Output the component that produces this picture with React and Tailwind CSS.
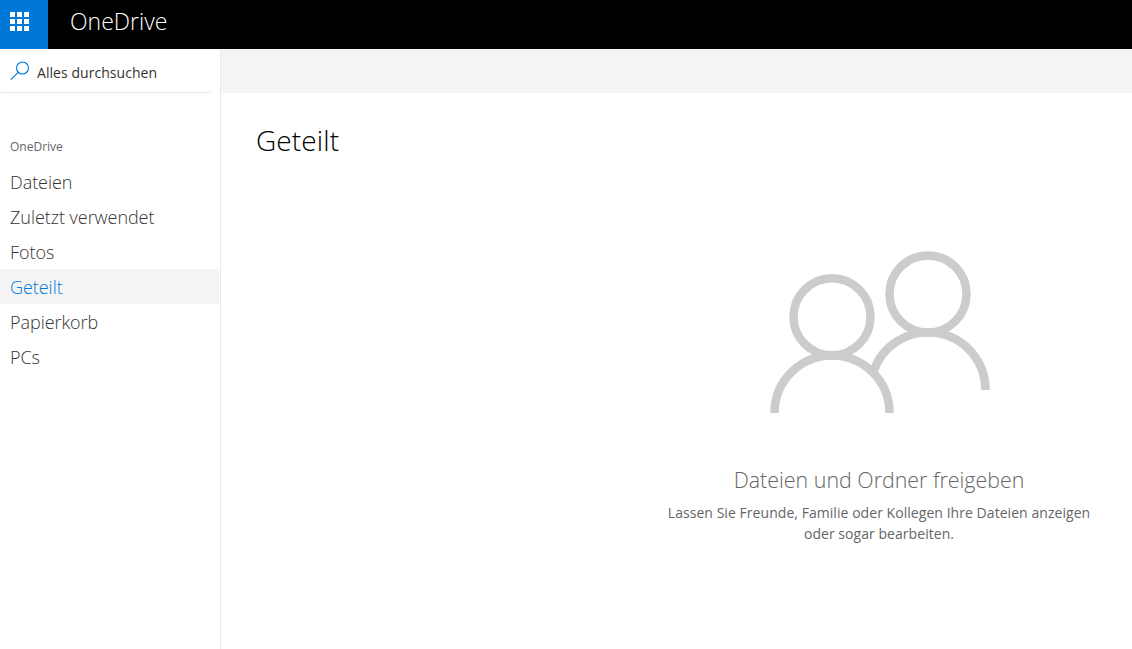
const navItems = ['Dateien', 'Zuletzt verwendet', 'Fotos', 'Geteilt', 'Papierkorb', 'PCs'];

function WaffleIcon() {
  return (
    <div className="grid grid-cols-3 gap-[2px]">
      {Array.from({ length: 9 }).map((_, index) => (
        <span key={index} className="block h-[5px] w-[5px] bg-white" />
      ))}
    </div>
  );
}

function SearchIcon() {
  return (
    <svg width="20" height="20" viewBox="0 0 20 20" fill="none" stroke="#0078d7" strokeWidth="1.1">
      <circle cx="12.5" cy="7" r="6" />
      <path d="M8.2 11.3 L0.8 18.7" />
    </svg>
  );
}

function PeopleIcon() {
  return (
    <svg width="222" height="164" viewBox="769 250 222 164" fill="none" stroke="#cccccc" strokeWidth="8.5">
      <circle cx="832" cy="316.7" r="38.5" />
      <circle cx="928" cy="294" r="38.5" />
      <path d="M774.5 413 A57.5 57.5 0 0 1 889.5 413" />
      <path d="M873 373 A57.5 57.5 0 0 1 985.5 390" />
    </svg>
  );
}

function App() {
  return (
    <div className="flex h-[649px] w-[1132px] flex-col overflow-hidden bg-white font-['Open_Sans',sans-serif]">
      <header className="flex h-[49px] shrink-0 items-center bg-black">
        <div className="flex h-full w-12 items-center justify-center bg-[#0078d7] pb-[6px] pr-[9px]">
          <WaffleIcon />
        </div>
        <span className="ml-[22px] pb-[6px] text-[23px] font-light text-white">OneDrive</span>
      </header>

      <div className="flex min-h-0 flex-1">
        <aside className="w-[221px] shrink-0 border-r border-[#eaeaea]">
          <div className="mx-[1px] flex h-[44px] w-[210px] items-center gap-[7px] border-b border-[#e6e6e6] pl-[9px]">
            <SearchIcon />
            <span className="pt-[4px] text-sm tracking-[0.05px] text-[#333333]">Alles durchsuchen</span>
          </div>
          <p className="mt-[46px] pl-[10px] text-xs text-[#666666]">OneDrive</p>
          <nav className="mt-[9px]">
            {navItems.map((item) => (
              <div
                key={item}
                className={`flex h-[35px] w-[219px] items-center pl-[10px] pt-[2px] text-[18px] font-light tracking-[-0.05px] ${
                  item === 'Geteilt' ? 'bg-[#f4f4f4] text-[#0078d7]' : 'text-[#333333]'
                }`}
              >
                {item}
              </div>
            ))}
          </nav>
        </aside>

        <main className="min-w-0 flex-1">
          <div className="h-[44px] bg-[#f4f4f4]" />
          <h1 className="ml-[35px] mt-[26px] text-[28px] leading-[42px] font-light tracking-[0.1px] text-black">Geteilt</h1>
          <div className="ml-[436px] mt-[89px] flex w-[444px] flex-col items-center">
            <div className="ml-[2px]">
              <PeopleIcon />
            </div>
            <h2 className="mt-[50px] text-[21.4px] leading-[32px] font-light text-[#666666]">Dateien und Ordner freigeben</h2>
            <p className="mt-[6px] text-center text-sm leading-[21px] tracking-[0.05px] text-[#666666]">
              Lassen Sie Freunde, Familie oder Kollegen Ihre Dateien anzeigen
              <br />
              oder sogar bearbeiten.
            </p>
          </div>
        </main>
      </div>
    </div>
  );
}

export default App;
